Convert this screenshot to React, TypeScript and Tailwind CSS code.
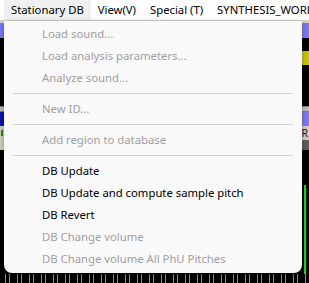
const font = "font-['Segoe_UI','Noto_Sans',sans-serif]";

type Item = { label: string; enabled?: boolean } | "sep";

const items: Item[] = [
  { label: "Load sound..." },
  { label: "Load analysis parameters..." },
  { label: "Analyze sound..." },
  "sep",
  { label: "New ID..." },
  "sep",
  { label: "Add region to database" },
  "sep",
  { label: "DB Update", enabled: true },
  { label: "DB Update and compute sample pitch", enabled: true },
  { label: "DB Revert", enabled: true },
  { label: "DB Change volume" },
  { label: "DB Change volume All PhU Pitches" },
];

function MenuBar() {
  return (
    <div className="flex h-5 items-center whitespace-nowrap bg-white text-[11.3px] text-black">
      <div className="ml-1 flex h-5 shrink-0 items-center bg-[#f0f0f0] px-[7px]">Stationary DB</div>
      <div className="flex h-5 shrink-0 items-center px-[7px]">View(V)</div>
      <div className="flex h-5 shrink-0 items-center px-[7px]">Special (T)</div>
      <div className="flex h-5 shrink-0 items-center px-[7px]">SYNTHESIS_WORK</div>
    </div>
  );
}

function Backdrop() {
  return (
    <div className="flex flex-col">
      <div className="h-[3px] bg-[#d4d0c8]" />
      <div className="h-[15px] bg-[#7b7bf7]" />
      <div className="flex h-[68px] flex-col bg-black">
        <div className="h-[13px]" />
        <div className="flex h-[14px] justify-end">
          <div className="w-[8px] bg-[#c8c800]" />
        </div>
      </div>
      <div className="h-[6px] border-y border-[#808080] bg-[#c0c0c0]" />
      <div className="flex h-[14px]">
        <div className="flex-1 bg-[#1010a8]" />
        <div className="flex-1 bg-[#7b7bf7]" />
      </div>
      <div className="flex h-[14px] items-center justify-between bg-[#d4d0c8] text-[11px]">
        <div className="ml-[1px] h-[6px] w-[2px] bg-[#00a000]" />
        <span className="mr-[1px] text-[#202040]">R</span>
      </div>
      <div className="flex h-[10px]">
        <div className="flex-1 bg-[#d4d0c8]" />
        <div className="flex-1 bg-[#606060]" />
      </div>
      <div className="flex h-[124px] justify-end bg-black">
        <div className="mr-[3px] mt-[35px] w-[2px] bg-[#00f000]" />
      </div>
      <div className="h-[9px] bg-[repeating-linear-gradient(90deg,#000_0px,#000_5px,#00f000_5px,#00f000_6px,#000_6px,#000_9px,#00f000_9px,#00f000_10px,#000_10px,#000_12px)]" />
    </div>
  );
}

function Dropdown() {
  return (
    <div className="absolute left-[4px] top-[21px] w-[298px] rounded-b-[8px] bg-[#f9f9f9] pb-[3px] pt-[2px] text-[11.3px] shadow-[0_2px_6px_rgba(0,0,0,0.35)]">
      {items.map((it, i) =>
        it === "sep" ? (
          <div key={i} className="flex h-[9px] items-center px-[9px]">
            <div className="h-px w-full bg-[#d5d5d5]" />
          </div>
        ) : (
          <div
            key={i}
            className={`flex h-[22px] items-center pl-[38px] ${it.enabled ? "text-black" : "text-[#a0a0a0]"}`}
          >
            {it.label}
          </div>
        )
      )}
    </div>
  );
}

export default function App() {
  return (
    <div className={`relative h-[283px] w-[309px] overflow-hidden ${font}`}>
      <MenuBar />
      <Backdrop />
      <Dropdown />
    </div>
  );
}
